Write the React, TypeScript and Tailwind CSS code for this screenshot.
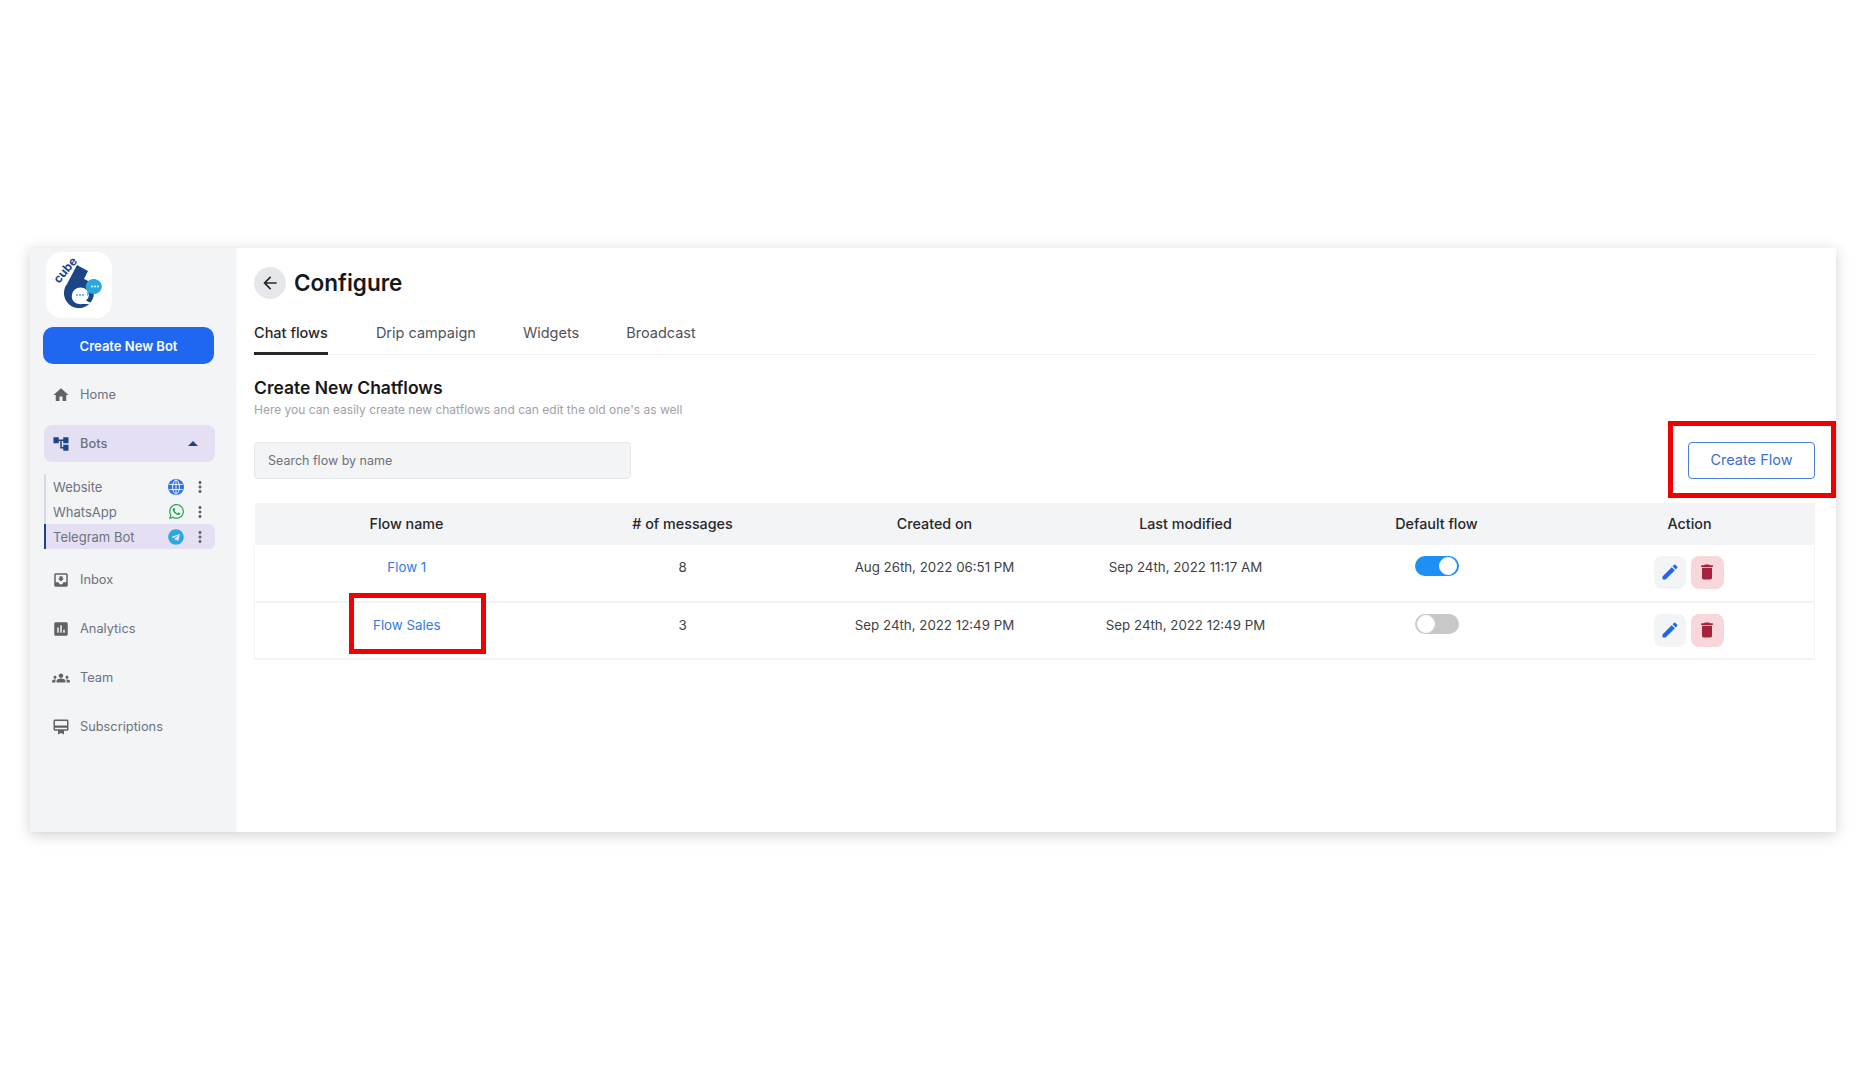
import { FaTelegram, FaWhatsapp } from "react-icons/fa";
import {
  MdAccountTree,
  MdArrowBack,
  MdArrowDropUp,
  MdAssessment,
  MdCardMembership,
  MdDelete,
  MdEdit,
  MdGroups,
  MdHome,
  MdMoreVert,
  MdMoveToInbox,
} from "react-icons/md";

function Logo() {
  return (
    <div className="ml-4 h-[66px] w-[66px] rounded-2xl bg-white">
      <svg viewBox="0 0 66 66" className="h-full w-full">
        <path d="M31 13 L42 19 L38 27 A15 15 0 1 1 21 32 Z" fill="#1c4587" />
        <path d="M26 43 a8.5 7.5 0 0 1 17 0 a8.5 7.5 0 0 1 -3 5.5 l7 3.5 h-11 a8.5 7.5 0 0 1 -10 -9z" fill="#fff" />
        <circle cx="31" cy="43" r="0.9" fill="#29a8e0" />
        <circle cx="34" cy="43" r="0.9" fill="#29a8e0" />
        <circle cx="37" cy="43" r="0.9" fill="#29a8e0" />
        <path d="M49 27 a8 7.5 0 1 1 -5 14 l-3 3 l0.5 -5 a8 7.5 0 0 1 7.5 -12z" fill="#29a8e0" />
        <circle cx="46" cy="34.5" r="0.9" fill="#fff" />
        <circle cx="49" cy="34.5" r="0.9" fill="#fff" />
        <circle cx="52" cy="34.5" r="0.9" fill="#fff" />
        <text
          x="13"
          y="32"
          transform="rotate(-50 13 32)"
          fontSize="12"
          fontWeight="700"
          fontFamily="Inter, sans-serif"
          fill="#1c4587"
        >
          cube
        </text>
      </svg>
    </div>
  );
}

function GlobeIcon() {
  return (
    <svg viewBox="0 0 16 16" className="h-4 w-4">
      <circle cx="8" cy="8" r="8" fill="#2f6fe0" />
      <g fill="none" stroke="#fff" strokeWidth="0.9">
        <ellipse cx="8" cy="8" rx="3.4" ry="7" />
        <path d="M8 1v14M1.2 5.4h13.6M1.2 10.6h13.6" />
      </g>
    </svg>
  );
}

const navTop = [{ label: "Home", icon: MdHome }];

const navBottom = [
  { label: "Inbox", icon: MdMoveToInbox },
  { label: "Analytics", icon: MdAssessment },
  { label: "Team", icon: MdGroups },
  { label: "Subscriptions", icon: MdCardMembership },
];

const bots = [
  { label: "Website", icon: <GlobeIcon />, active: false },
  { label: "WhatsApp", icon: <FaWhatsapp className="h-[17px] w-[17px] text-[#25a55a]" />, active: false },
  { label: "Telegram Bot", icon: <FaTelegram className="h-4 w-4 text-[#2aa8e0]" />, active: true },
];

function NavItem({ label, icon: Icon }: { label: string; icon: typeof MdHome }) {
  return (
    <div className="flex h-[37px] items-center pl-[22px] text-[12.8px] text-[#6b7280]">
      <Icon className="h-[18px] w-[18px] text-[#5f6368]" />
      <span className="ml-[10px]">{label}</span>
    </div>
  );
}

function Sidebar() {
  return (
    <aside className="z-10 flex w-[205px] shrink-0 flex-col bg-[#f3f4f6] pt-1 shadow-[1px_0_2px_rgba(0,0,0,0.06)]">
      <Logo />
      <button className="mt-[9px] ml-[13px] h-[37px] w-[171px] rounded-[10px] bg-[#1f66f0] pt-[2px] text-[13px] font-semibold text-white">
        Create New Bot
      </button>
      <div className="mt-3">
        {navTop.map((item) => (
          <NavItem key={item.label} {...item} />
        ))}
      </div>
      <div className="mt-3 ml-[14px] flex h-[37px] w-[171px] items-center rounded-lg bg-[#e5dff3] pl-2 text-[12.8px] font-medium text-[#6b7280]">
        <MdAccountTree className="h-[18px] w-[18px] text-[#1c4587]" />
        <span className="ml-[10px]">Bots</span>
        <MdArrowDropUp className="ml-auto mr-[10px] h-6 w-6 text-[#1c4587]" />
      </div>
      <div className="mt-[12px] ml-[14px] w-[171px]">
        {bots.map((bot) => (
          <div
            key={bot.label}
            className={`flex h-[25px] items-center border-l-2 pl-[7px] text-[13px] text-[#6b7280] ${
              bot.active ? "rounded-r-md border-[#1c4587] bg-[#e5dff3]" : "border-[#d3d9e6]"
            }`}
          >
            <span className="pt-[2px]">{bot.label}</span>
            <span className="ml-auto flex h-5 w-5 items-center justify-center">{bot.icon}</span>
            <MdMoreVert className="ml-[5px] mr-[6px] h-[18px] w-[18px] text-[#5f6368]" />
          </div>
        ))}
      </div>
      <div className="mt-3 flex flex-col gap-3">
        {navBottom.map((item) => (
          <NavItem key={item.label} {...item} />
        ))}
      </div>
    </aside>
  );
}

function Toggle({ on }: { on: boolean }) {
  return (
    <div
      className={`mx-auto flex h-5 w-11 items-center rounded-full border-2 ${
        on ? "justify-end border-[#1e90f5] bg-[#1e90f5]" : "justify-start border-[#c8c8c8] bg-[#c8c8c8]"
      }`}
    >
      <div className="h-[18px] w-[18px] rounded-full border border-white bg-white" />
    </div>
  );
}

function Actions() {
  return (
    <div className="ml-[89px] flex gap-[5px]">
      <button className="flex h-[33px] w-[32px] items-center justify-center rounded-lg bg-[#f3f4f6]">
        <MdEdit className="h-5 w-5 text-[#2563eb]" />
      </button>
      <button className="flex h-[33px] w-[33px] items-center justify-center rounded-lg bg-[#f8d7da]">
        <MdDelete className="h-5 w-5 text-[#a5243d]" />
      </button>
    </div>
  );
}

const flows = [
  {
    name: "Flow 1",
    messages: 8,
    created: "Aug 26th, 2022 06:51 PM",
    modified: "Sep 24th, 2022 11:17 AM",
    isDefault: true,
    highlight: false,
  },
  {
    name: "Flow Sales",
    messages: 3,
    created: "Sep 24th, 2022 12:49 PM",
    modified: "Sep 24th, 2022 12:49 PM",
    isDefault: false,
    highlight: true,
  },
];

function FlowsTable() {
  return (
    <table className="mt-6 w-[1561px] table-fixed text-center text-[13.3px]">
      <thead>
        <tr className="h-[42px] bg-[#f3f4f6] text-[14.3px] font-medium text-[#27272a]">
          <th className="w-[304px] font-medium">Flow name</th>
          <th className="w-[248px] font-medium"># of messages</th>
          <th className="w-[256px] font-medium">Created on</th>
          <th className="w-[246px] font-medium">Last modified</th>
          <th className="w-[256px] font-medium">Default flow</th>
          <th className="font-medium">Action</th>
        </tr>
      </thead>
      <tbody className="text-[#3f3f46]">
        {flows.map((flow) => (
          <tr key={flow.name} className="h-[57px] border-b-2 border-x border-[#f3f4f6] align-top">
            <td className="relative pt-[13px] text-[#2f7be8]">
              {flow.name}
              {flow.highlight && (
                <div className="absolute top-[-10px] left-[94px] h-[61px] w-[137px] border-[5px] border-[#f00000]" />
              )}
            </td>
            <td className="pt-[13px]">{flow.messages}</td>
            <td className="pt-[13px]">{flow.created}</td>
            <td className="pt-[13px]">{flow.modified}</td>
            <td className="pt-[11px]">
              <Toggle on={flow.isDefault} />
            </td>
            <td className="pt-[11px]">
              <Actions />
            </td>
          </tr>
        ))}
      </tbody>
    </table>
  );
}

export default function App() {
  return (
    <div className="h-[1080px] bg-white pt-[248px] pl-[30px] font-['Inter',sans-serif]">
      <div className="flex h-[584px] w-[1806px] bg-white shadow-[0_3px_14px_rgba(0,0,0,0.18)]">
        <Sidebar />
        <main className="flex-1 pt-[18px] pl-[19px]">
          <div className="flex items-center gap-2">
            <button className="flex h-8 w-8 items-center justify-center rounded-full bg-[#e5e7eb]">
              <MdArrowBack className="h-5 w-5 text-[#27272a]" />
            </button>
            <h1 className="text-[22.5px] font-semibold text-[#18181b]">Configure</h1>
          </div>
          <div className="mt-[22px] flex w-[1561px] gap-[47px] border-b border-[#f0f0f0] text-[14.5px] text-[#52525b]">
            <div className="-mb-px mr-px border-b-[3px] border-[#27272a] pb-2 font-medium text-[#27272a]">Chat flows</div>
            <div>Drip campaign</div>
            <div>Widgets</div>
            <div>Broadcast</div>
          </div>
          <h2 className="mt-5 text-[17.5px] font-semibold text-[#18181b]">Create New Chatflows</h2>
          <p className="text-[12px] text-[#a1a1aa]">
            Here you can easily create new chatflows and can edit the old one's as well
          </p>
          <div className="mt-[23px] flex w-[1561px] items-center justify-between">
            <input
              placeholder="Search flow by name"
              className="h-[37px] w-[377px] rounded border border-[#e5e7eb] bg-[#f3f4f6] pl-[13px] text-[12.5px] placeholder:text-[#71717a]"
            />
            <div className="relative">
              <button className="h-[37px] w-[127px] rounded border border-[#4a7fd6] bg-white text-[14.5px] text-[#3b6fd6]">
                Create Flow
              </button>
              <div className="absolute top-[-21px] left-[-20px] h-[77px] w-[168px] border-[5px] border-[#f00000]" />
            </div>
          </div>
          <FlowsTable />
        </main>
      </div>
    </div>
  );
}
